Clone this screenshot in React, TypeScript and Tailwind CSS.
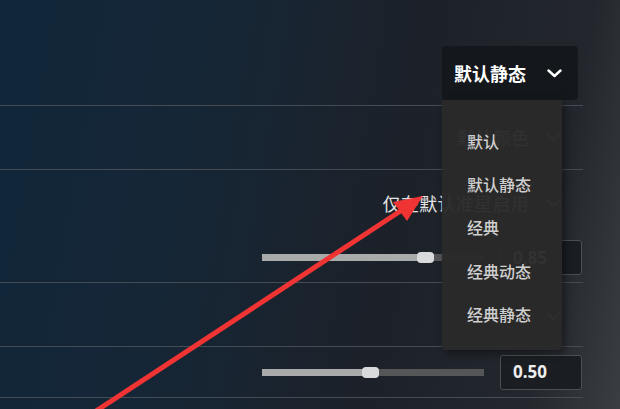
import React from "react";

const cjk = { fontFamily: '"Noto Sans CJK SC", "Noto Sans", sans-serif' };

function Chevron({ className }: { className?: string }) {
  return (
    <svg width="15" height="9" viewBox="0 0 15 9" className={className}>
      <path d="M1.5 1.5 L7.5 7 L13.5 1.5" fill="none" stroke="currentColor" strokeWidth="2.4" strokeLinecap="round" strokeLinejoin="round" />
    </svg>
  );
}

function Slider({ fill }: { fill: number }) {
  return (
    <div className="relative w-[222px] h-[7px] bg-[#545658]">
      <div className="h-full bg-[#a9aaaa]" style={{ width: `${fill}px` }} />
      <div
        className="absolute top-[-2px] w-[17px] h-[11px] rounded-[4px] bg-[#d9dadb]"
        style={{ left: `${fill - 8}px` }}
      />
    </div>
  );
}

function ValueBox({ value }: { value: string }) {
  return (
    <div className="w-[82px] h-[35px] border border-[#4d5052] rounded-[3px] bg-[#1a1d22] flex items-center pl-[12px]">
      <span className="text-[17px] font-bold text-[#eeeeee]" style={{ fontFamily: '"Noto Sans", sans-serif' }}>
        {value}
      </span>
    </div>
  );
}

const options = ["默认", "默认静态", "经典", "经典动态", "经典静态"];

export default function App() {
  return (
    <div
      className="relative w-[620px] h-[409px] overflow-hidden bg-[linear-gradient(100deg,#11263a_0%,#152636_30%,#1c2129_62%,#23272d_86%,#3a3d41_100%)]"
      style={cjk}
    >
      <div className="w-[583px] flex flex-col">
        <div className="h-[106px] border-b border-[#454c53]" />

        <div className="h-[64px] border-b border-[#454c53] flex items-center justify-end pr-[22px] gap-[17px]">
          <span className="text-[18px] text-[#d8d8d8]">默认颜色</span>
          <Chevron className="text-[#8a8a8a]" />
        </div>

        <div className="h-[113px] border-b border-[#454c53] flex flex-col">
          <div className="h-[66px] flex items-center justify-end pr-[22px] gap-[17px]">
            <span className="text-[18px] text-[#e4e4e4] tracking-[0.3px]">仅在默认准星启用</span>
            <Chevron className="text-[#8a8a8a]" />
          </div>
          <div className="flex items-center justify-end pr-[1px] gap-[16px] mt-[4px]">
            <Slider fill={163} />
            <ValueBox value="0.85" />
          </div>
        </div>

        <div className="h-[64px] border-b border-[#454c53] flex items-center justify-end pr-[22px]">
          <Chevron className="text-[#8a8a8a] mt-[4px]" />
        </div>

        <div className="h-[51px] border-b border-[#454c53] flex items-center justify-end pr-[1px] gap-[16px]">
          <Slider fill={108} />
          <ValueBox value="0.50" />
        </div>
      </div>

      {/* open select */}
      <div className="absolute left-[442px] top-[46px] w-[136px] h-[54px] rounded-[4px] bg-[#14171b] flex items-center pl-[12px] pr-[16px] justify-between">
        <span className="text-[18px] font-bold text-white">默认静态</span>
        <Chevron className="text-white" />
      </div>
      <div className="absolute left-[442px] top-[100px] w-[120px] h-[250px] rounded-b-[4px] bg-[#2a2a2a]/[0.96] shadow-[3px_3px_8px_rgba(0,0,0,0.45)] flex flex-col pt-[19px]">
        {options.map((o) => (
          <div key={o} className="h-[43.4px] flex items-center pl-[25px] text-[16px] font-medium text-[#cfcfcf]">
            {o}
          </div>
        ))}
      </div>

      {/* red annotation arrow */}
      <svg className="absolute inset-0 pointer-events-none" width="620" height="409" viewBox="0 0 620 409">
        <line x1="93" y1="413" x2="402" y2="210" stroke="#f03434" strokeWidth="5" />
        <polygon points="423,196 393,202 407,221" fill="#f03434" />
      </svg>
    </div>
  );
}
